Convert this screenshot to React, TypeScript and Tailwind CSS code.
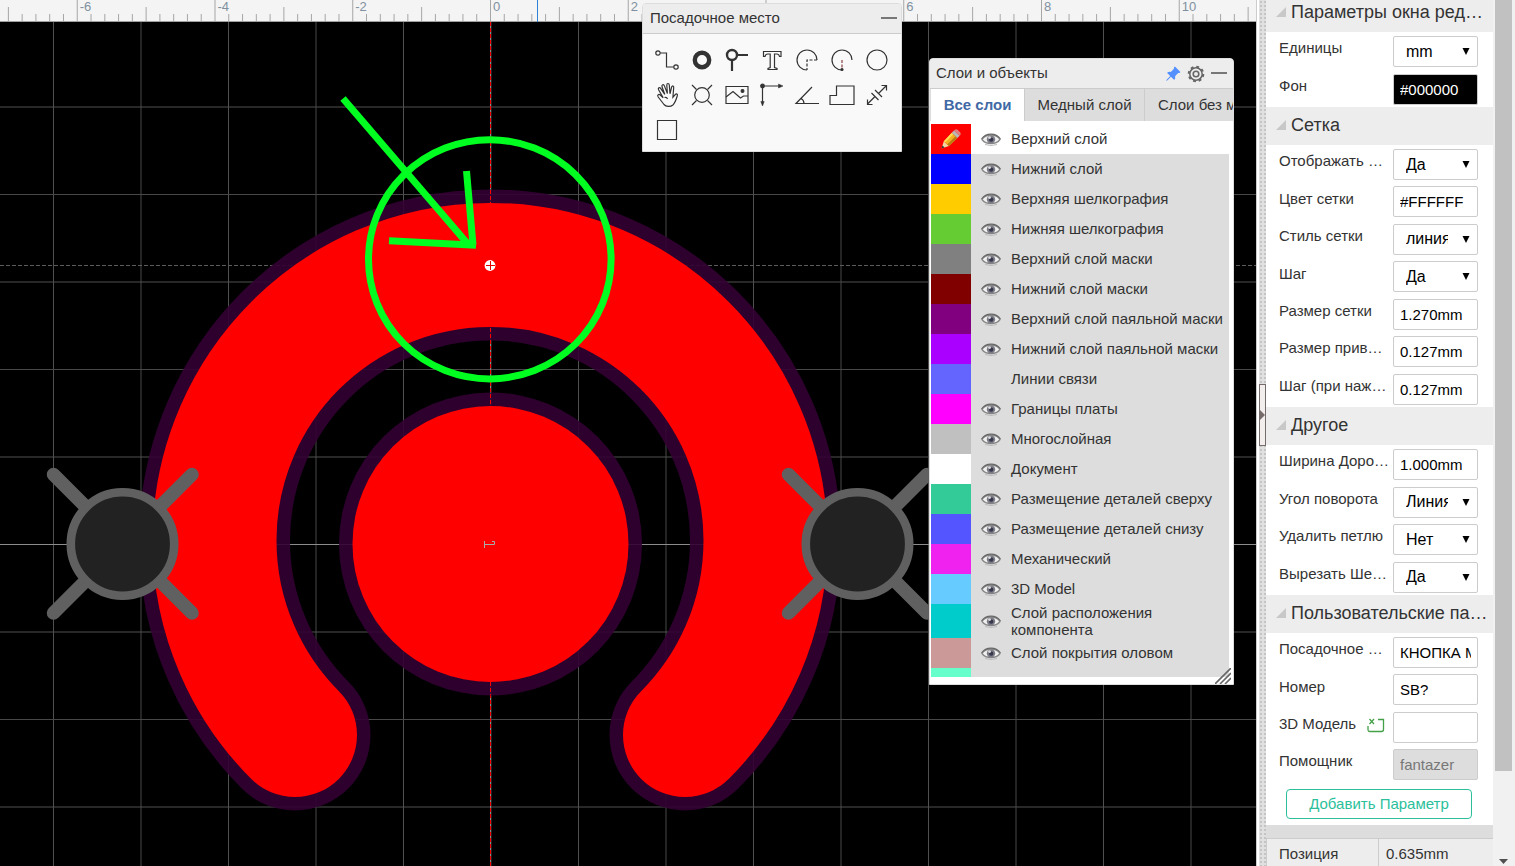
import type { ReactNode } from "react";
import { BsPinAngleFill } from "react-icons/bs";

type Layer = {
  name: string;
  color: string;
  visible?: boolean;
  active?: boolean;
};

type Param = {
  id: string;
  label: string;
  value: string;
  kind?: "select" | "black" | "disabled";
  icon?: boolean;
};

const layers: Layer[] = [
  { name: "Верхний слой", color: "bg-[#ff0000]", active: true },
  { name: "Нижний слой", color: "bg-[#0000ff]" },
  { name: "Верхняя шелкография", color: "bg-[#ffcc00]" },
  { name: "Нижняя шелкография", color: "bg-[#66cc33]" },
  { name: "Верхний слой маски", color: "bg-[#808080]" },
  { name: "Нижний слой маски", color: "bg-[#800000]" },
  { name: "Верхний слой паяльной маски", color: "bg-[#800080]" },
  { name: "Нижний слой паяльной маски", color: "bg-[#aa00ff]" },
  { name: "Линии связи", color: "bg-[#6464ff]", visible: false },
  { name: "Границы платы", color: "bg-[#ff00ff]" },
  { name: "Многослойная", color: "bg-[#c0c0c0]" },
  { name: "Документ", color: "bg-[#ffffff]" },
  { name: "Размещение деталей сверху", color: "bg-[#33cc99]" },
  { name: "Размещение деталей снизу", color: "bg-[#5555ff]" },
  { name: "Механический", color: "bg-[#f022f0]" },
  { name: "3D Model", color: "bg-[#66ccff]" },
  { name: "Слой расположения компонента", color: "bg-[#00cccc]" },
  { name: "Слой покрытия оловом", color: "bg-[#cc9999]" },
];

const windowParams: Param[] = [
  { id: "units", label: "Единицы", value: "mm", kind: "select" },
  { id: "background", label: "Фон", value: "#000000", kind: "black" },
];

const gridParams: Param[] = [
  { id: "grid-visible", label: "Отображать …", value: "Да", kind: "select" },
  { id: "grid-color", label: "Цвет сетки", value: "#FFFFFF" },
  { id: "grid-style", label: "Стиль сетки", value: "линия", kind: "select" },
  { id: "snap", label: "Шаг", value: "Да", kind: "select" },
  { id: "grid-size", label: "Размер сетки", value: "1.270mm" },
  { id: "snap-size", label: "Размер прив…", value: "0.127mm" },
  { id: "alt-snap", label: "Шаг (при наж…", value: "0.127mm" },
];

const otherParams: Param[] = [
  { id: "track-width", label: "Ширина Доро…", value: "1.000mm" },
  { id: "angle", label: "Угол поворота", value: "Линия 45", kind: "select" },
  { id: "loop", label: "Удалить петлю", value: "Нет", kind: "select" },
  { id: "cut-silk", label: "Вырезать Ше…", value: "Да", kind: "select" },
];

const customParams: Param[] = [
  { id: "footprint", label: "Посадочное …", value: "КНОПКА МЕМБРАНА" },
  { id: "prefix", label: "Номер", value: "SB?" },
  { id: "model", label: "3D Модель", value: "", icon: true },
  { id: "contributor", label: "Помощник", value: "fantazer", kind: "disabled" },
];

const tools: { title: string; icon: ReactNode }[] = [
  {
    title: "Дорожка",
    icon: (
      <>
        <circle cx="3" cy="5" r="2.2" />
        <path d="M5.5 5H11.5V19H18.5" />
        <circle cx="21" cy="19" r="2.2" />
      </>
    ),
  },
  { title: "Контактная площадка", icon: <circle cx="12" cy="12" r="7.2" strokeWidth="4.4" /> },
  {
    title: "Переходное отверстие",
    icon: (
      <>
        <circle cx="7" cy="7" r="5" strokeWidth="2.4" />
        <path d="M12 7H23M7 12V23" strokeWidth="2.2" />
      </>
    ),
  },
  {
    title: "Текст",
    icon: (
      <path d="M3.5 3.5H21V8.5H19.5Q19 6 16.8 6H14.5V19.5L17 20.5V21.5H8V20.5L10.2 19.5V6H7.8Q5.5 6 5 8.5H3.5Z" />
    ),
  },
  {
    title: "Дуга",
    icon: (
      <>
        <path d="M22 12A10 10 0 1 0 12 22" />
        <path d="M22 12H12V22" strokeDasharray="3 1.5" />
      </>
    ),
  },
  {
    title: "Дуга по центру",
    icon: (
      <>
        <path d="M22 12A10 10 0 1 0 12 22" />
        <path d="M12 12V21" stroke="#8a4040" strokeDasharray="3 1.5" />
        <circle cx="12" cy="21.5" r="1" fill="#333" />
      </>
    ),
  },
  { title: "Окружность", icon: <circle cx="12" cy="12" r="10" /> },
  {
    title: "Перемещение",
    icon: (
      <path d="M9 21.5L3.2 14C1.8 12 3.8 10.6 5.5 12.2L8.2 14.8L3.6 6.8C2.6 4.8 4.6 3.8 5.8 5.6L9.8 11.4L7 3.8C6.4 1.6 8.6 .9 9.4 2.9L12.4 10.6L11.8 2.2C11.8 0 14 0 14.3 2L15 10.8L16.6 4.2C17.2 2.2 19 2.8 18.7 4.8L17.9 14.2L20.2 11.6C21.4 10.3 22.9 11.2 22.3 12.8C21.3 16 20.4 19.6 17.9 22C15.4 24 11 23.8 9 21.5ZM9.5 14.5C11 14 12 14.5 12.5 16" />
    ),
  },
  {
    title: "Отверстие",
    icon: (
      <>
        <circle cx="12" cy="12" r="7.3" />
        <path d="M2 2L6.5 6.5M22 2L17.5 6.5M2 22L6.5 17.5M22 22L17.5 17.5" />
      </>
    ),
  },
  {
    title: "Изображение",
    icon: (
      <>
        <path d="M1 3.5H23V20.5H1Z" />
        <path d="M1 14L8 8.5L15.5 15L18.5 13H23" />
        <circle cx="17.5" cy="8" r="1.4" fill="#333" />
      </>
    ),
  },
  {
    title: "Начало холста",
    icon: (
      <>
        <circle cx="2.5" cy="3" r="1.8" fill="#333" />
        <path d="M2.5 3H20M2.5 3V20" />
        <path d="M18.5 1L23 3L18.5 5ZM.8 18.5L2.5 23L4.2 18.5Z" fill="#333" strokeWidth=".5" />
      </>
    ),
  },
  {
    title: "Транспортир",
    icon: <path d="M17 4L1 20.5H24M6 15.5Q9 17 9 20.5" />,
  },
  {
    title: "Медная область",
    icon: <path d="M0 21.5V12.5H6.5V3H24V21.5Z" />,
  },
  {
    title: "Размер",
    icon: (
      <>
        <path d="M2.5 21L10 13.5M6.5 10L13.5 17M2.5 16.5V21.5H7.5" />
        <path d="M21 3L13.5 10.5M10 7L17 14M16.5 2.5H21.5V7.5" />
      </>
    ),
  },
  { title: "Прямоугольник", icon: <path d="M2.5 2.5H21.5V21.5H2.5Z" /> },
];

const gridOffsets = [-5, -4, -3, -2, -1, 0, 1, 2, 3, 4, 5, 6, 7, 8, 9, 10, 11, 12];
const rulerTicks = Array.from({ length: 120 }, (_, i) => i - 38);

function Board() {
  return (
    <svg className="block h-full w-full bg-black" role="img" aria-label="Плата">
      {gridOffsets.map((i) => (
        <g key={i} stroke={i % 2 ? "#505050" : "#484848"}>
          <line x1={491 + i * 87.5} x2={491 + i * 87.5} y1="0" y2="100%" />
          <line x1="0" x2="100%" y1={544.5 + (i - 2) * 87.5} y2={544.5 + (i - 2) * 87.5} />
        </g>
      ))}
      <line x1="0" x2="100%" y1="544.5" y2="544.5" stroke="#8c8c8c" />
      <line x1="0" x2="100%" y1="265.5" y2="265.5" stroke="#5c5c5c" strokeDasharray="4 2" />
      <line x1="490.5" x2="490.5" y1="22" y2="100%" stroke="#888" />
      <line x1="490.5" x2="490.5" y1="22" y2="100%" stroke="#ff0000" strokeDasharray="4 2" />

      <g fill="none" strokeLinecap="round">
        <path
          d="M295 735A275.5 275.5 0 1 1 685 735"
          stroke="#330033"
          strokeOpacity=".9"
          strokeWidth="151"
        />
        <path d="M295 735A275.5 275.5 0 1 1 685 735" stroke="#ff0000" strokeWidth="124" />
      </g>
      <circle cx="490.5" cy="544" r="151.5" fill="#330033" fillOpacity=".9" />
      <line x1="490.5" x2="490.5" y1="190" y2="695" stroke="#ff0000" strokeDasharray="4 2" />
      <circle cx="490.5" cy="544" r="138" fill="#ff0000" />
      <path d="M484.5 541V548M485 544.5H494.5V541.5H492" fill="none" stroke="#aaa" />

      {[122.5, 857.5].map((x) => (
        <g key={x} stroke="#606060">
          <path
            d={`M${x - 69} 474.5L${x + 69.5} 613M${x + 69.5} 474.5L${x - 69} 613`}
            strokeWidth="13.5"
            strokeLinecap="round"
          />
          <circle cx={x} cy="544" r="51.7" fill="#222" strokeWidth="8.6" />
        </g>
      ))}

      <circle cx="490" cy="265.5" r="5.4" fill="#fff" />
      <path d="M486 265.5H495M490.5 261V270" stroke="#e00000" />
      <g fill="none" stroke="#00ff20" strokeWidth="7">
        <ellipse cx="489.8" cy="259.3" rx="121.3" ry="119.6" />
        <path d="M343 98.5L467 243M389 240.7L476 245.2M466.5 171L473 245" />
      </g>

      <rect width="100%" height="22" fill="#f4f4f4" />
      <line x1="0" x2="100%" y1="21.5" y2="21.5" stroke="#a0a0a0" />
      {rulerTicks.map((i) => (
        <line
          key={i}
          x1={490.5 + i * 13.775}
          x2={490.5 + i * 13.775}
          y1={i % 10 === 0 ? 0 : i % 5 === 0 ? 7 : 14}
          y2="21"
          stroke="#a6a6a6"
        />
      ))}
      {[-6, -4, -2, 0, 2, 6, 8, 10].map((n) => (
        <text
          key={n}
          x={493 + n * 68.87}
          y="11"
          fill="#8090a0"
          className="font-['Liberation_Sans',sans-serif] text-[13px]"
        >
          {n}
        </text>
      ))}
      <line x1="537.5" x2="537.5" y1="0" y2="22" stroke="#2c83d6" />
    </svg>
  );
}

function MinimizeButton() {
  return (
    <button type="button" aria-label="Свернуть" className="flex h-6 w-4 items-center pb-0.5">
      <span className="h-0.5 w-full bg-[#777]" />
    </button>
  );
}

function ToolsPanel() {
  return (
    <section className="absolute top-[3px] left-[642px] w-[260px] overflow-hidden rounded-t border border-[#ddd] bg-[#f9f9f9]">
      <header className="flex h-[30px] items-center justify-between border-b border-[#ccc] bg-[#ededed] pr-1 pl-[7px]">
        <h2 className="text-[15px]">Посадочное место</h2>
        <MinimizeButton />
      </header>
      <div className="grid grid-cols-[repeat(7,35px)] px-1.5 pt-2 pb-1">
        {tools.map((tool) => (
          <button
            key={tool.title}
            type="button"
            title={tool.title}
            className="flex h-[35px] items-center justify-center"
          >
            <svg
              className="size-6 overflow-visible"
              viewBox="0 0 24 24"
              fill="none"
              stroke="#333"
              strokeWidth="1.2"
            >
              {tool.icon}
            </svg>
          </button>
        ))}
      </div>
    </section>
  );
}

function EyeIcon() {
  return (
    <svg className="h-4 w-5" viewBox="0 0 20 16">
      <path d="M1 8.5C5 2.5 15 2.5 19 8.5C15 14 5 14 1 8.5Z" fill="#f0f0f0" stroke="#888" strokeWidth="1.3" />
      <path d="M.5 8C5 1.5 15 1.5 19.5 8" fill="none" stroke="#666" strokeWidth="1.2" />
      <circle cx="10" cy="8.4" r="4.2" fill="#7c7c86" />
      <circle cx="10.2" cy="8.6" r="2.2" fill="#38384e" />
      <circle cx="8.6" cy="6.6" r="1.4" fill="#ddd" />
      <path d="M4 13.5Q10 15.5 16 13.5" fill="none" stroke="#bbb" />
    </svg>
  );
}

function PencilIcon() {
  return (
    <svg className="size-5" viewBox="0 0 20 20">
      <path d="M.5 19.5L2.8 12.2L8 17Z" fill="#f3d3a0" />
      <path d="M.5 19.5L1.4 16.6L3.6 18.6Z" fill="#333" />
      <path d="M2.8 12.2L10.8 3.8L16.4 9L8 17Z" fill="#f5b021" />
      <path d="M6.2 15.4L14.6 7.2L16.4 9L8 17Z" fill="#b97a14" />
      <path d="M2.8 12.2L10.8 3.8L12.3 5.2L4.2 13.5Z" fill="#ffdc55" />
      <path d="M10.8 3.8L13 1.6L18.6 6.8L16.4 9Z" fill="#b8b8b8" />
      <path d="M13 1.6L13.8.8Q15.4-.4 16.8 1L19 3.2Q20.3 4.6 19.3 6L18.6 6.8Z" fill="#e08080" />
    </svg>
  );
}

function LayersPanel() {
  return (
    <section className="absolute top-[58px] left-[929px] w-[305px] overflow-hidden rounded-t border border-[#ddd] bg-white">
      <header className="flex h-[30px] items-center border-b border-[#ccc] bg-[#ededed] pr-1.5 pl-1.5">
        <h2 className="flex-1 text-[15px]">Слои и объекты</h2>
        <button type="button" aria-label="Закрепить" className="mr-1.5 text-[#5590ff]">
          <BsPinAngleFill className="size-4" />
        </button>
        <button type="button" aria-label="Настройки" className="mr-1.5">
          <svg className="size-[18px]" viewBox="0 0 18 18" fill="none" stroke="#666">
            <circle cx="9" cy="9" r="7.3" strokeWidth="2" strokeDasharray="2.87 2.87" />
            <circle cx="9" cy="9" r="6.2" strokeWidth="1.5" />
            <circle cx="9" cy="9" r="2.8" strokeWidth="1.6" />
          </svg>
        </button>
        <MinimizeButton />
      </header>
      <div role="tablist" className="flex h-8 overflow-hidden bg-[#ddd] pl-px whitespace-nowrap">
        <button
          type="button"
          role="tab"
          aria-selected="true"
          className="w-[94px] shrink-0 border-r border-[#ccc] bg-white text-[15px] font-bold text-[#4169a5]"
        >
          Все слои
        </button>
        <button type="button" role="tab" className="w-[120px] shrink-0 border-r border-[#ccc] text-[15px]">
          Медный слой
        </button>
        <button type="button" role="tab" className="shrink-0 pl-[13px] text-[15px]">
          Слои без меди
        </button>
      </div>
      <ul className="mt-[3px] mr-1 mb-[7px] ml-px h-[553px] overflow-hidden">
        {layers.map((layer) => (
          <li
            key={layer.name}
            className={
              layer.active
                ? "flex min-h-[30px] bg-white"
                : "flex min-h-[30px] bg-[#ddd]"
            }
          >
            <span className={`flex w-10 shrink-0 items-center justify-center ${layer.color}`}>
              {layer.active && <PencilIcon />}
            </span>
            <span className="flex w-10 shrink-0 items-center justify-center">
              {layer.visible !== false && <EyeIcon />}
            </span>
            <span
              className={
                layer.name.startsWith("Слой расположения")
                  ? "w-[180px] self-center text-[15px] leading-[17px]"
                  : "self-center pb-0.5 text-[15px] leading-[17px] whitespace-nowrap"
              }
            >
              {layer.name}
            </span>
          </li>
        ))}
        <li className="flex h-[30px] bg-[#ddd]">
          <span className="w-10 bg-[#66ffcc]" />
        </li>
      </ul>
      <svg
        className="absolute right-0.5 bottom-0 size-4"
        viewBox="0 0 16 16"
        stroke="#666"
        strokeWidth="1.6"
      >
        <path d="M0 16L16 0M5 16L16 5M10 16L16 10" />
      </svg>
    </section>
  );
}

function SectionHeader({ title }: { title: string }) {
  return (
    <h3 className="flex h-[38px] shrink-0 items-center gap-[5px] bg-[#ededed] pb-0.5 pl-2.5 text-[18px] whitespace-nowrap">
      <svg className="size-2.5" viewBox="0 0 10 10">
        <path d="M10 0V10H0Z" fill="#c8c8c8" />
      </svg>
      {title}
    </h3>
  );
}

function ModelIcon() {
  return (
    <svg className="size-[18px]" viewBox="0 0 18 18" fill="none" stroke="#43a047" strokeWidth="1.3">
      <path d="M11 4.5H16.5V14.5Q16.5 16.5 14.5 16.5H3Q1 16.5 1 14.5V11" />
      <path d="M2.5 4L7 9M7 4L2.5 9" />
    </svg>
  );
}

function ParamRow({ param }: { param: Param }) {
  return (
    <div className="flex min-w-0 items-start pt-1 pr-[15px] pl-[13px]">
      <div className="flex h-[25px] min-w-0 flex-1 items-center justify-between pr-2 whitespace-nowrap">
        <label htmlFor={param.id} className="text-[15px]">
          {param.label}
        </label>
        {param.icon && <ModelIcon />}
      </div>
      {param.kind === "select" ? (
        <div className="relative shrink-0">
          <select
            id={param.id}
            defaultValue={param.value}
            className="block h-[31px] w-[85px] appearance-none overflow-hidden rounded-xs border border-[#ccc] bg-white pr-[29px] pl-3 text-base text-black"
          >
            <option>{param.value}</option>
          </select>
          <svg className="pointer-events-none absolute top-3 right-2 h-[7px] w-2" viewBox="0 0 8 7">
            <path d="M.5 0H7.5L4 7Z" fill="#000" />
          </svg>
        </div>
      ) : (
        <div className="h-[31px] w-[85px] shrink-0">
          <input
            id={param.id}
            defaultValue={param.value}
            disabled={param.kind === "disabled"}
            className={
              param.kind === "black"
                ? "h-full w-full rounded-xs border border-[#ccc] bg-black px-1.5 text-[15px] text-white"
                : param.kind === "disabled"
                  ? "h-full w-full rounded-xs border border-[#ccc] bg-[#ddd] px-1.5 text-[15px] text-[#777]"
                  : "h-full w-full rounded-xs border border-[#ccc] bg-white px-1.5 text-[15px] text-black"
            }
          />
        </div>
      )}
    </div>
  );
}

function ParamList({ params, className }: { params: Param[]; className: string }) {
  return (
    <div className={`grid shrink-0 auto-rows-fr grid-cols-1 ${className}`}>
      {params.map((param) => (
        <ParamRow key={param.id} param={param} />
      ))}
    </div>
  );
}

function ParamsPanel() {
  return (
    <aside className="-mt-1.5 flex w-[227px] shrink-0 flex-col bg-white">
      <SectionHeader title="Параметры окна ред…" />
      <ParamList params={windowParams} className="h-[75px]" />
      <SectionHeader title="Сетка" />
      <ParamList params={gridParams} className="h-[262px]" />
      <SectionHeader title="Другое" />
      <ParamList params={otherParams} className="h-[150px]" />
      <SectionHeader title="Пользовательские па…" />
      <ParamList params={customParams} className="h-[149px]" />
      <div className="pt-[7px] pr-[21px] pb-1.5 pl-5">
        <button
          type="button"
          className="h-[30px] w-full rounded border border-[#2bbf9b] text-[15px] text-[#2bbf9b]"
        >
          Добавить Параметр
        </button>
      </div>
      <div className="h-[13px] shrink-0 bg-[#ddd]" />
      <table className="w-full bg-[#ededed] text-left text-[15px] leading-[17px]">
        <tbody>
          <tr className="border-t border-[#ccc] align-top">
            <th scope="row" className="w-[112px] border-x border-[#ccc] pt-1.5 pl-3 font-normal">
              Позиция
            </th>
            <td className="pt-1.5 pb-8 pl-[7px]">0.635mm</td>
          </tr>
        </tbody>
      </table>
    </aside>
  );
}

function Splitter() {
  return (
    <div className="flex w-[10px] shrink-0 border-l border-[#ccc] bg-white pl-0.5">
      <div className="flex w-full items-start bg-[#e0e0e0] bg-[radial-gradient(#c4c4c4_1px,transparent_1px)] bg-[size:4px_4px] pt-[384px]">
        <button
          type="button"
          aria-label="Свернуть панель"
          className="flex h-[62px] w-full items-center border border-[#766b6b] bg-[#f2eeee]"
        >
          <svg className="h-2.5 w-[5px]" viewBox="0 0 5 10">
            <path d="M0 0L5 5L0 10Z" fill="#766b6b" />
          </svg>
        </button>
      </div>
    </div>
  );
}

function ScrollBar() {
  return (
    <div className="flex w-[22px] shrink-0 flex-col items-center justify-between bg-[#f1f1f1] pr-[3px] pl-0.5">
      <div className="h-[89%] w-full bg-[#c1c1c1]" />
      <svg className="mb-0.5 h-[5px] w-[9px]" viewBox="0 0 9 5">
        <path d="M0 0H9L4.5 5Z" fill="#505050" />
      </svg>
    </div>
  );
}

export default function App() {
  return (
    <div className="flex h-screen overflow-hidden bg-white font-['Liberation_Sans',Arial,sans-serif] text-[#333]">
      <main className="relative min-w-0 flex-1 overflow-hidden">
        <Board />
        <ToolsPanel />
        <LayersPanel />
      </main>
      <Splitter />
      <ParamsPanel />
      <ScrollBar />
    </div>
  );
}
